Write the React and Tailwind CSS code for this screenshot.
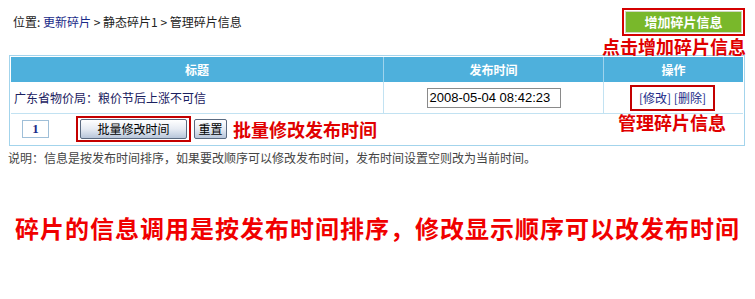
export default function App() {
  const cjk = { fontFamily: '"Noto Sans CJK SC", "Liberation Sans", sans-serif' };
  return (
    <div className="relative w-[755px] h-[299px] bg-white overflow-hidden text-[12px] text-[#222]" style={cjk}>
      <div className="h-[55px] flex justify-between">
        <div className="pl-[13px] pt-[14px] leading-[16px]">
          位置: <span className="text-[#1a2a88]">更新碎片</span> &gt; 静态碎片1 &gt; 管理碎片信息
        </div>
        <div className="pr-[10px] pt-[8px] flex flex-col items-end">
          <div className="w-[123px] h-[31px] border-2 border-[#d40000] p-[1px]">
            <div className="h-full bg-[#79b82b] border border-[#cfd8c0] flex items-center justify-center text-white font-bold text-[13px]">
              增加碎片信息
            </div>
          </div>
          <div className="mt-[1px] mr-[-1px] text-[18px] leading-[18px] font-bold text-[#e00000] relative z-10 whitespace-nowrap">
            点击增加碎片信息
          </div>
        </div>
      </div>

      <div className="ml-[9px] w-[736px] border border-[#a3d4ec] p-[1px]">
        <div className="flex h-[25px] bg-[#4eb0dc] text-white font-bold">
          <div className="w-[372px] flex items-center justify-center">标题</div>
          <div className="w-[220px] border-l border-[#9ed3ec] flex items-center justify-center">发布时间</div>
          <div className="flex-1 border-l border-[#9ed3ec] flex items-center justify-center">操作</div>
        </div>
        <div className="flex h-[32px] border-b border-[#c2e2f2]">
          <div className="w-[372px] flex items-center pl-[3px] text-[#1a2060]">广东省物价局：粮价节后上涨不可信</div>
          <div className="w-[220px] border-l border-[#c2e2f2] flex items-center justify-center">
            <div className="w-[134px] h-[20px] border border-[#8a8a8a] flex items-center pl-[2px] text-[13px] text-black" style={{ fontFamily: '"Liberation Sans", Arial, sans-serif' }}>
              2008-05-04 08:42:23
            </div>
          </div>
          <div className="flex-1 border-l border-[#c2e2f2] flex items-center justify-center">
            <div className="w-[85px] h-[26px] border-2 border-[#c40000] flex items-center justify-center text-[#1a2a88] ml-[-2px] whitespace-pre">
              [修改] [删除]
            </div>
          </div>
        </div>
        <div className="flex h-[30px] items-center">
          <div className="ml-[11px] w-[27px] h-[18px] border border-[#9fbfd8] flex items-center justify-center font-bold text-[13px] text-[#1a2a88]" style={{ fontFamily: '"Liberation Serif", serif' }}>
            1
          </div>
          <div className="ml-[27px] w-[115px] h-[26px] border-2 border-[#c40000] flex items-center justify-center">
            <div className="w-[107px] h-[20px] border border-[#5a6a80] rounded-[2px] bg-gradient-to-b from-[#ffffff] via-[#e6ebf3] to-[#b8c6da] flex items-center justify-center text-black">
              批量修改时间
            </div>
          </div>
          <div className="ml-[3px] w-[33px] h-[20px] border border-[#5a6a80] rounded-[2px] bg-gradient-to-b from-[#ffffff] via-[#e6ebf3] to-[#b8c6da] flex items-center justify-center text-black">
            重置
          </div>
          <div className="ml-[6px] text-[18px] leading-[18px] font-bold text-[#e00000] whitespace-nowrap">批量修改发布时间</div>
          <div className="ml-auto mr-[17px] self-start mt-[-1px] text-[18px] leading-[18px] font-bold text-[#e00000] whitespace-nowrap">管理碎片信息</div>
        </div>
      </div>

      <div className="mt-[4px] pl-[8px] leading-[16px] text-[#444]">
        说明：信息是按发布时间排序，如果要改顺序可以修改发布时间，发布时间设置空则改为当前时间。
      </div>

      <div className="mt-[48px] pl-[15px] text-[24px] leading-[28px] font-bold text-[#f00000] whitespace-nowrap tracking-[1px]">
        碎片的信息调用是按发布时间排序，修改显示顺序可以改发布时间
      </div>
    </div>
  );
}
